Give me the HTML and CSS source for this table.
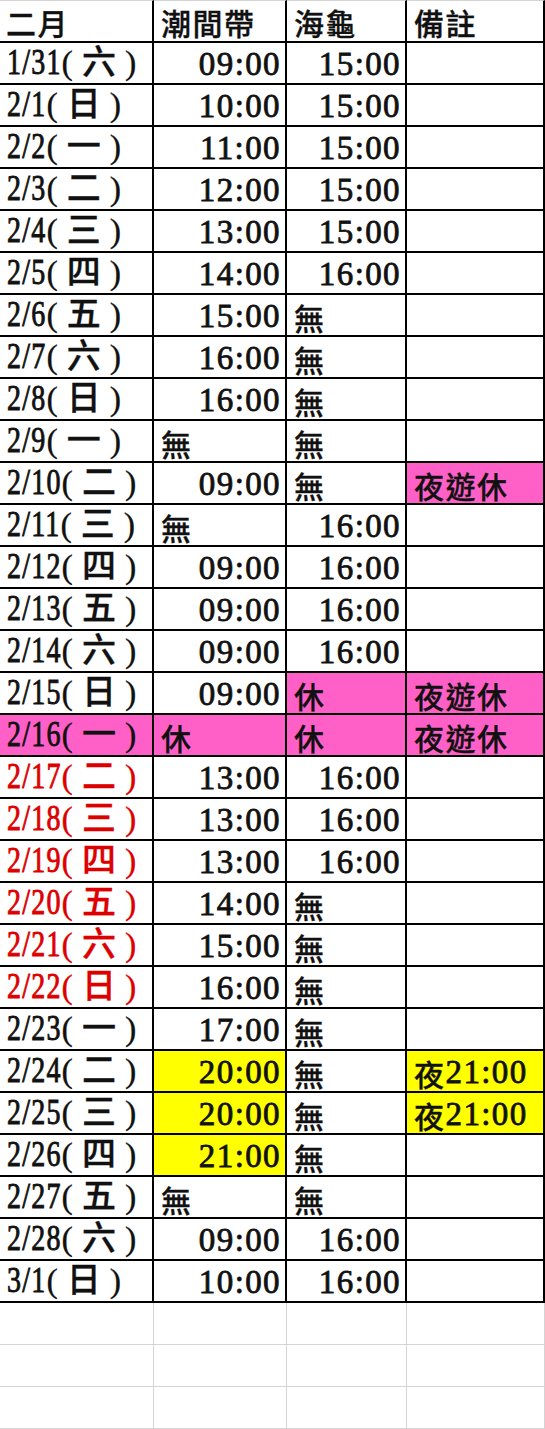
FILE: index.html
```html
<!DOCTYPE html>
<html lang="zh-Hant">
<head>
<meta charset="utf-8">
<title>二月</title>
<link rel="stylesheet" href="styles.css">
</head>
<body>
<div class="sheet">
  <div class="row head">
    <div class="c n">二月</div>
    <div class="c n">潮間帶</div>
    <div class="c n">海龜</div>
    <div class="c n">備註</div>
  </div>
  <div class="row"><div class="c d"><span class="md">1/31</span><span class="wd">(六)</span></div><div class="c t">09:00</div><div class="c t">15:00</div><div class="c"></div></div>
  <div class="row"><div class="c d"><span class="md">2/1</span><span class="wd">(日)</span></div><div class="c t">10:00</div><div class="c t">15:00</div><div class="c"></div></div>
  <div class="row"><div class="c d"><span class="md">2/2</span><span class="wd">(一)</span></div><div class="c t">11:00</div><div class="c t">15:00</div><div class="c"></div></div>
  <div class="row"><div class="c d"><span class="md">2/3</span><span class="wd">(二)</span></div><div class="c t">12:00</div><div class="c t">15:00</div><div class="c"></div></div>
  <div class="row"><div class="c d"><span class="md">2/4</span><span class="wd">(三)</span></div><div class="c t">13:00</div><div class="c t">15:00</div><div class="c"></div></div>
  <div class="row"><div class="c d"><span class="md">2/5</span><span class="wd">(四)</span></div><div class="c t">14:00</div><div class="c t">16:00</div><div class="c"></div></div>
  <div class="row"><div class="c d"><span class="md">2/6</span><span class="wd">(五)</span></div><div class="c t">15:00</div><div class="c n">無</div><div class="c"></div></div>
  <div class="row"><div class="c d"><span class="md">2/7</span><span class="wd">(六)</span></div><div class="c t">16:00</div><div class="c n">無</div><div class="c"></div></div>
  <div class="row"><div class="c d"><span class="md">2/8</span><span class="wd">(日)</span></div><div class="c t">16:00</div><div class="c n">無</div><div class="c"></div></div>
  <div class="row"><div class="c d"><span class="md">2/9</span><span class="wd">(一)</span></div><div class="c n">無</div><div class="c n">無</div><div class="c"></div></div>
  <div class="row"><div class="c d"><span class="md">2/10</span><span class="wd">(二)</span></div><div class="c t">09:00</div><div class="c n">無</div><div class="c n pink">夜遊休</div></div>
  <div class="row"><div class="c d"><span class="md">2/11</span><span class="wd">(三)</span></div><div class="c n">無</div><div class="c t">16:00</div><div class="c"></div></div>
  <div class="row"><div class="c d"><span class="md">2/12</span><span class="wd">(四)</span></div><div class="c t">09:00</div><div class="c t">16:00</div><div class="c"></div></div>
  <div class="row"><div class="c d"><span class="md">2/13</span><span class="wd">(五)</span></div><div class="c t">09:00</div><div class="c t">16:00</div><div class="c"></div></div>
  <div class="row"><div class="c d"><span class="md">2/14</span><span class="wd">(六)</span></div><div class="c t">09:00</div><div class="c t">16:00</div><div class="c"></div></div>
  <div class="row"><div class="c d"><span class="md">2/15</span><span class="wd">(日)</span></div><div class="c t">09:00</div><div class="c n pink">休</div><div class="c n pink">夜遊休</div></div>
  <div class="row"><div class="c d pink"><span class="md">2/16</span><span class="wd">(一)</span></div><div class="c n pink">休</div><div class="c n pink">休</div><div class="c n pink">夜遊休</div></div>
  <div class="row red"><div class="c d"><span class="md">2/17</span><span class="wd">(二)</span></div><div class="c t">13:00</div><div class="c t">16:00</div><div class="c"></div></div>
  <div class="row red"><div class="c d"><span class="md">2/18</span><span class="wd">(三)</span></div><div class="c t">13:00</div><div class="c t">16:00</div><div class="c"></div></div>
  <div class="row red"><div class="c d"><span class="md">2/19</span><span class="wd">(四)</span></div><div class="c t">13:00</div><div class="c t">16:00</div><div class="c"></div></div>
  <div class="row red"><div class="c d"><span class="md">2/20</span><span class="wd">(五)</span></div><div class="c t">14:00</div><div class="c n">無</div><div class="c"></div></div>
  <div class="row red"><div class="c d"><span class="md">2/21</span><span class="wd">(六)</span></div><div class="c t">15:00</div><div class="c n">無</div><div class="c"></div></div>
  <div class="row red"><div class="c d"><span class="md">2/22</span><span class="wd">(日)</span></div><div class="c t">16:00</div><div class="c n">無</div><div class="c"></div></div>
  <div class="row"><div class="c d"><span class="md">2/23</span><span class="wd">(一)</span></div><div class="c t">17:00</div><div class="c n">無</div><div class="c"></div></div>
  <div class="row"><div class="c d"><span class="md">2/24</span><span class="wd">(二)</span></div><div class="c t yel">20:00</div><div class="c n">無</div><div class="c n yel">夜<span class="num">21:00</span></div></div>
  <div class="row"><div class="c d"><span class="md">2/25</span><span class="wd">(三)</span></div><div class="c t yel">20:00</div><div class="c n">無</div><div class="c n yel">夜<span class="num">21:00</span></div></div>
  <div class="row"><div class="c d"><span class="md">2/26</span><span class="wd">(四)</span></div><div class="c t yel">21:00</div><div class="c n">無</div><div class="c"></div></div>
  <div class="row"><div class="c d"><span class="md">2/27</span><span class="wd">(五)</span></div><div class="c n">無</div><div class="c n">無</div><div class="c"></div></div>
  <div class="row"><div class="c d"><span class="md">2/28</span><span class="wd">(六)</span></div><div class="c t">09:00</div><div class="c t">16:00</div><div class="c"></div></div>
  <div class="row"><div class="c d"><span class="md">3/1</span><span class="wd">(日)</span></div><div class="c t">10:00</div><div class="c t">16:00</div><div class="c"></div></div>
  <div class="row empty"><div class="c"></div><div class="c"></div><div class="c"></div><div class="c"></div></div>
  <div class="row empty"><div class="c"></div><div class="c"></div><div class="c"></div><div class="c"></div></div>
  <div class="row empty"><div class="c"></div><div class="c"></div><div class="c"></div><div class="c"></div></div>
</div>
</body>
</html>
```

FILE: styles.css
```css
html, body {
  margin: 0;
  padding: 0;
  background: #ffffff;
}

body {
  font-family: "Liberation Serif", "Noto Sans CJK TC", serif;
  color: #111111;
}

.sheet {
  display: grid;
  grid-template-columns: 154px 133px 120px 138px;
  grid-template-rows: 43px;
  grid-auto-rows: 42px;
  width: 545px;
}

.row {
  display: contents;
}

.c {
  box-sizing: border-box;
  display: flex;
  align-items: center;
  border-right: 2px solid #000;
  border-bottom: 2px solid #000;
  padding-top: 3px;
  white-space: nowrap;
  overflow: hidden;
}

.head .c {
  border-top: 1px solid #d4d4d4;
  padding-top: 2px;
}

.head .c:first-child {
  padding-left: 6px;
}

/* date column */
.d {
  align-items: baseline;
  padding-left: 7px;
  padding-top: 3px;
}

.d span {
  display: inline-block;
  line-height: 1;
}

.d .md {
  margin-top: 5px;
  font-size: 28px;
  letter-spacing: 1.2px;
  -webkit-text-stroke: 0.7px currentColor;
  transform: scaleY(1.28);
  transform-origin: 50% 83%;
}

.d .wd {
  font-size: 34px;
  font-weight: 500;
  letter-spacing: 9px;
  -webkit-text-stroke: 0.3px currentColor;
}

/* time columns */
.t {
  justify-content: flex-end;
  padding-right: 4px;
  font-size: 33px;
  letter-spacing: 1.4px;
  -webkit-text-stroke: 0.8px currentColor;
}

/* CJK text cells */
.n {
  padding-left: 7px;
  font-family: "Noto Sans CJK TC", sans-serif;
  font-size: 30px;
  font-weight: 500;
  letter-spacing: 1.5px;
  -webkit-text-stroke: 0.3px currentColor;
}

.n .num {
  font-family: "Liberation Serif", serif;
  font-size: 33px;
  letter-spacing: 1.4px;
  -webkit-text-stroke: 0.8px currentColor;
}

.pink {
  background: #ff60c8;
}

.yel {
  background: #ffff00;
}

.red .d {
  color: #dd0000;
}

.empty .c {
  border-right: 1px solid #d4d4d4;
  border-bottom: 1px solid #d4d4d4;
}
```
